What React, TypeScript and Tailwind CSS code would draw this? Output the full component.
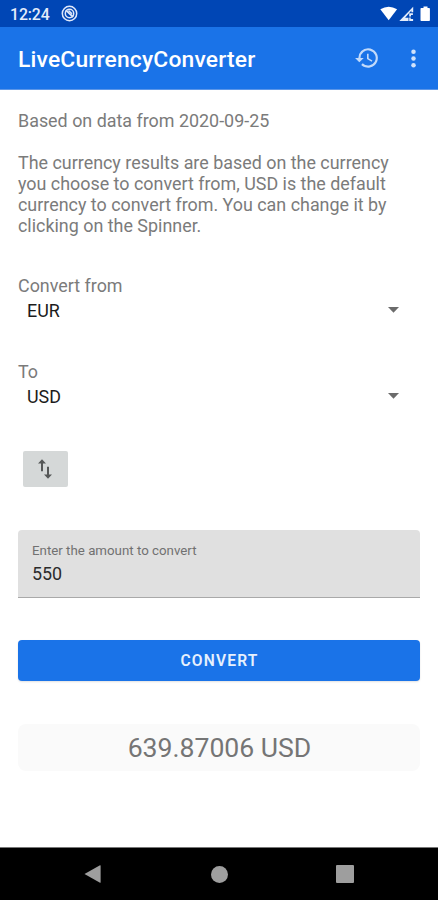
import type { ReactNode } from "react";

function StatusBar() {
  return (
    <div className="flex h-[27px] items-center justify-between bg-[#0046b5] pl-[10px] pr-[8px] text-white">
      <div className="flex items-center gap-[11px]">
        <span className="pt-[2px] text-[15.8px] leading-[18px] font-medium tracking-[-0.1px] text-[#e4ecfb]">12:24</span>
        <svg className="size-[17px]" viewBox="0 0 17 17" fill="none" stroke="#e0e9fa">
          <circle cx="8.5" cy="8.5" r="7.2" strokeWidth="1.5" />
          <circle cx="8.5" cy="8.5" r="4.2" strokeWidth="1.5" />
          <path d="M4.8 5.2 L12.2 12" strokeWidth="1.7" />
          <path d="M7.5 5.6 L11 8.8" strokeWidth="1.4" />
        </svg>
      </div>
      <svg className="mt-[2px] h-[17px] w-[50px]" viewBox="0 0 50 17" fill="#fff">
        <path d="M.3 3.3 Q8.7-2 17.1 3.3 L8.7 14.2z" />
        <path d="M33.2 .8V6.3h-1.8V4.6l-6.3 7.1h3.4V15h-9.2z" fill="#e5edfb" />
        <path d="M29.2 7.3h3.7V9H31v1.5h-1.8zM29.2 11.5h1.5V13h2.4v2h-3.9z" fill="#e5edfb" />
        <path d="M41.3 2h2.2V.5h4V2h1.6q.8 0 .8.8v11.4q0 .8-.8.8h-7.8q-.8 0-.8-.8V2.8q0-.8.8-.8z" />
      </svg>
    </div>
  );
}

function AppBar() {
  return (
    <header className="flex h-[63px] items-center border-b border-[#5c96e8] bg-[#1a73e8] pr-[11px] pl-[18px] text-white">
      <h1 className="flex-1 pt-[3px] text-[22.8px] leading-[28px] font-medium tracking-[0.2px]">LiveCurrencyConverter</h1>
      <svg className="size-[26px]" viewBox="0 0 24 24" fill="#c2dafa">
        <path d="M13 3a9 9 0 0 0-9 9H1l3.89 3.89.07.14L9 12H6a7 7 0 1 1 2.06 4.94l-1.42 1.42A9 9 0 1 0 13 3zm-1 5v5l4.28 2.54.72-1.21-3.5-2.08V8z" />
      </svg>
      <svg className="ml-[20px] size-[27px]" viewBox="0 0 24 24" fill="#d0e2fb">
        <circle cx="12" cy="6" r="2" />
        <circle cx="12" cy="12" r="2" />
        <circle cx="12" cy="18" r="2" />
      </svg>
    </header>
  );
}

function Spinner({ label, value }: { label: string; value: string }) {
  return (
    <div>
      <div>{label}</div>
      <div className="mt-[4px] flex items-center justify-between pr-[21px] pl-[9px] text-[#1c1c1c]">
        <span>{value}</span>
        <svg className="mb-[2px] h-[6px] w-[11px]" viewBox="0 0 11 6" fill="#6b6b6b">
          <path d="M0 0h11L5.5 5.8z" />
        </svg>
      </div>
    </div>
  );
}

function NavSlot({ children }: { children: ReactNode }) {
  return <div className="flex w-[126px] justify-center">{children}</div>;
}

export default function App() {
  return (
    <div className="flex h-[900px] w-[438px] flex-col bg-white font-[Roboto,sans-serif]">
      <StatusBar />
      <AppBar />
      <main className="flex flex-1 flex-col px-[18px] pt-[20px] text-[17.9px] leading-[21px] text-[#7b7b7b]">
        <p>Based on data from 2020-09-25</p>
        <p className="mt-[21px] whitespace-nowrap">
          The currency results are based on the currency
          <br />
          you choose to convert from, USD is the default
          <br />
          currency to convert from. You can change it by
          <br />
          clicking on the Spinner.
        </p>
        <div className="mt-[39px] flex flex-col gap-[40px]">
          <Spinner label="Convert from" value="EUR" />
          <Spinner label="To" value="USD" />
        </div>
        <button className="mt-[44px] ml-[5px] flex h-[36px] w-[45px] items-center justify-center rounded-[2px] bg-[#d5d8d8]">
          <svg className="mr-[2px] h-[26px] w-[24px]" viewBox="0 0 24 24" preserveAspectRatio="none" fill="#565858">
            <path d="M16 17.01V10h-2v7.01h-3L15 21l4-3.99zM9 3 5 6.99h3V14h2V6.99h3z" />
          </svg>
        </button>
        <div className="mt-[43px] flex h-[68px] flex-col rounded-t-[4px] border-b-[1.5px] border-[#a9a9a9] bg-[#e0e0e0] px-[14px] pt-[13px]">
          <span className="text-[13.3px] leading-[16px] text-[#717171]">Enter the amount to convert</span>
          <span className="mt-[4px] text-[#2b2b2b]">550</span>
        </div>
        <button className="mt-[42px] flex h-[41px] items-center justify-center rounded-[4px] bg-[#1a73e8] pt-[2px] pl-[1px] text-[15.6px] font-semibold tracking-[1.15px] text-[#e6f0fd] shadow-[0_1px_2px_rgba(0,0,0,0.12)]">
          CONVERT
        </button>
        <div className="mt-[43px] flex h-[47px] items-center justify-center rounded-[8px] bg-[#fafafa] pt-px pl-px text-[26.6px] leading-[32px] text-[#757575]">
          639.87006 USD
        </div>
      </main>
      <nav className="flex h-[53px] items-center justify-center border-t border-[#777] bg-black">
        <NavSlot>
          <svg className="mr-[2px] h-[18px] w-[17px]" viewBox="0 0 17 18" fill="#9e9e9e">
            <path d="M.5 9 16 .3q.6-.3.6.5v16.4q0 .8-.6.5z" />
          </svg>
        </NavSlot>
        <NavSlot>
          <div className="size-[17px] rounded-full bg-[#9e9e9e]" />
        </NavSlot>
        <NavSlot>
          <div className="size-[18px] rounded-[1px] bg-[#9e9e9e]" />
        </NavSlot>
      </nav>
    </div>
  );
}
